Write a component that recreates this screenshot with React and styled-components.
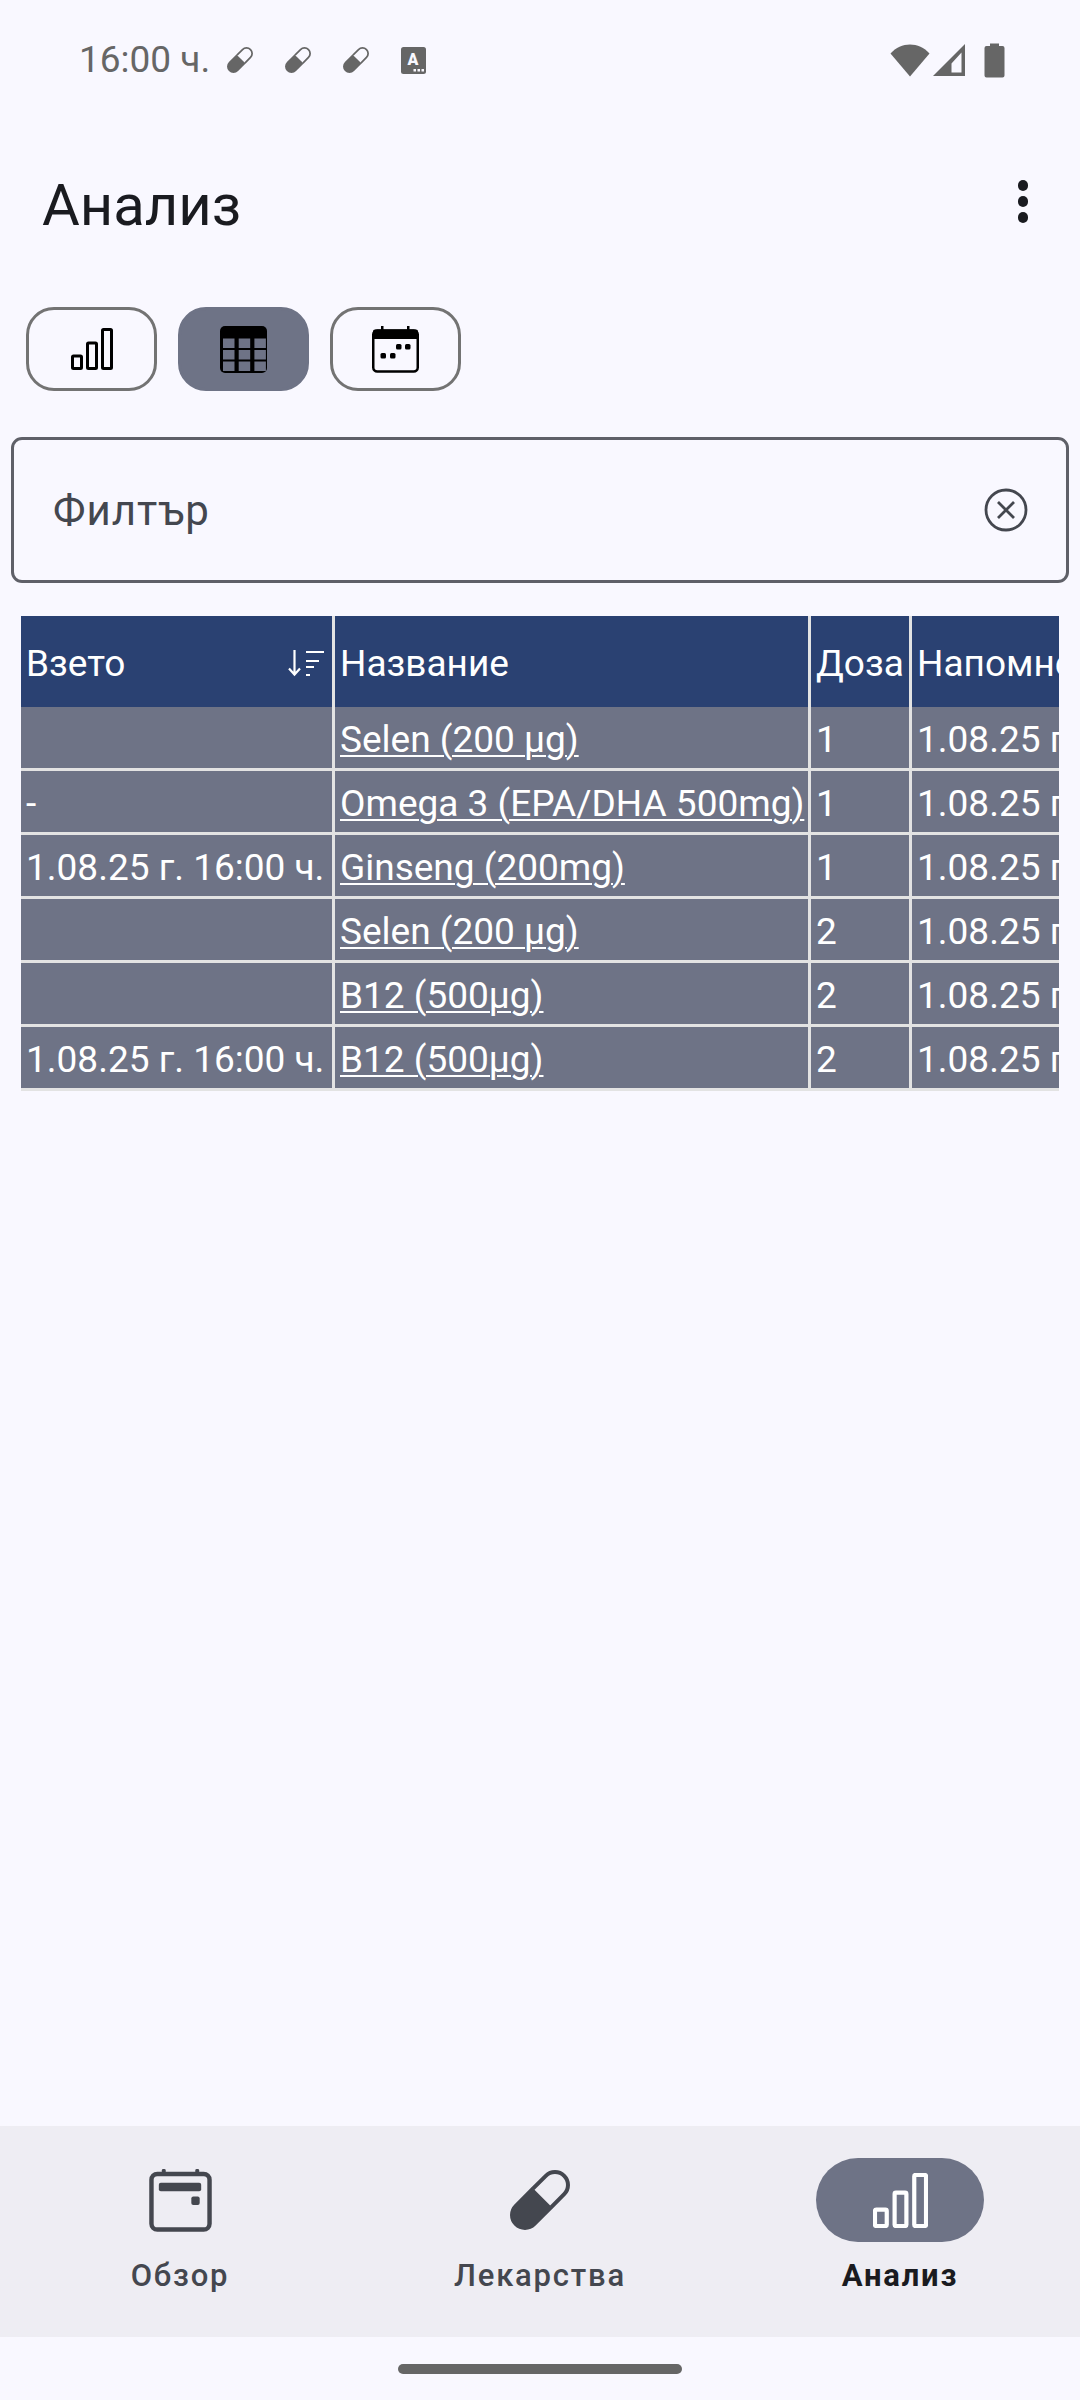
import React from "react";
import styled, { createGlobalStyle } from "styled-components";

const Global = createGlobalStyle`
  html, body { margin: 0; padding: 0; background: #f9f8ff; }
  * { box-sizing: border-box; }
  #root { width: 1080px; height: 2400px; }
`;

const Page = styled.div`
  width: 1080px;
  height: 2400px;
  display: flex;
  flex-direction: column;
  background: #f9f8ff;
  font-family: Roboto, "Noto Sans", sans-serif;
  overflow: hidden;
`;

const StatusBar = styled.div`
  height: 120px;
  flex: none;
  padding: 40px 0 0 79px;
  display: flex;
  align-items: flex-start;
  color: #666666;
`;

const Time = styled.span`
  font-size: 37px;
  line-height: 40px;
  width: 148px;
`;

const NotifIcons = styled.div`
  display: flex;
  gap: 32px;
  align-items: center;
  height: 40px;
`;

const StatusRight = styled.div`
  margin-left: auto;
  padding-right: 75px;
  display: flex;
  align-items: center;
  height: 40px;
`;

const AppBar = styled.div`
  height: 187px;
  flex: none;
  display: flex;
  align-items: flex-start;
  justify-content: space-between;
  padding: 49px 52px 0 42px;
`;

const Title = styled.h1`
  margin: 0;
  font-size: 58px;
  font-weight: 400;
  line-height: 72px;
  color: #1a1b20;
`;

const MoreDots = styled.div`
  display: flex;
  flex-direction: column;
  gap: 5.5px;
  padding-top: 11px;
  & > i {
    display: block;
    width: 10.5px;
    height: 10.5px;
    border-radius: 50%;
    background: #1a1b20;
  }
`;

const Toolbar = styled.div`
  display: flex;
  gap: 21px;
  padding-left: 26px;
  flex: none;
`;

const ToggleButton = styled.div`
  width: 131px;
  height: 84px;
  border-radius: 28px;
  display: flex;
  align-items: center;
  justify-content: center;
  border: 3px solid ${(p) => (p.$active ? "#6e7386" : "#737373")};
  background: ${(p) => (p.$active ? "#6e7386" : "transparent")};
`;

const FilterBox = styled.div`
  margin: 46px 11px 0;
  height: 146px;
  flex: none;
  border: 3px solid #5f6068;
  border-radius: 11px;
  display: flex;
  align-items: center;
  justify-content: space-between;
  padding: 0 38.5px 0 39px;
  color: #44474f;
`;

const FilterLabel = styled.span`
  font-size: 42px;
  letter-spacing: 1px;
`;

const TableClip = styled.div`
  margin: 33px 21px 0;
  flex: none;
  overflow: hidden;
`;

const TableGrid = styled.div`
  display: grid;
  grid-template-columns: 311px 473px 98px 400px;
  grid-template-rows: 88px;
  grid-auto-rows: 61px;
  column-gap: 3px;
  row-gap: 3px;
  width: 1294px;
  background: #e3e3e3;
  padding-bottom: 3px;
  color: #ffffff;
  font-size: 37px;
`;

const HeadCell = styled.div`
  margin-bottom: -3px;
  background: #2a4172;
  display: flex;
  align-items: center;
  justify-content: space-between;
  padding: 3px 8px 0 5px;
  white-space: nowrap;
`;

const Cell = styled.div`
  background: #6e7386;
  display: flex;
  align-items: center;
  padding: 3px 5px 0;
  white-space: nowrap;
`;

const LinkText = styled.span`
  text-decoration: underline;
  text-underline-offset: 3px;
  text-decoration-thickness: 2px;
`;

const Spacer = styled.div`
  flex: 1;
`;

const BottomNav = styled.nav`
  flex: none;
  height: 211px;
  background: #eeedf3;
  display: grid;
  grid-template-columns: repeat(3, 1fr);
  padding-top: 32px;
`;

const NavItem = styled.div`
  display: flex;
  flex-direction: column;
  align-items: center;
  color: ${(p) => (p.$active ? "#1a1b20" : "#44474f")};
  font-size: 31px;
  font-weight: ${(p) => (p.$active ? 700 : 500)};
  letter-spacing: 1.8px;
`;

const NavIconWrap = styled.div`
  width: 168px;
  height: 84px;
  border-radius: 42px;
  display: flex;
  align-items: center;
  justify-content: center;
  background: ${(p) => (p.$active ? "#6e7386" : "transparent")};
  margin-bottom: 15px;
`;

const GestureArea = styled.div`
  flex: none;
  height: 63px;
  display: flex;
  justify-content: center;
  padding-top: 27px;
`;

const GestureBar = styled.div`
  width: 284px;
  height: 10px;
  border-radius: 5px;
  background: #666666;
`;

/* Drawings */
const Pill = ({ size, color, sw }) => (
  <svg width={size} height={size} viewBox="0 0 60 60" style={{ display: "block" }}>
    <g transform="rotate(45 30 30)">
      <path d="M17 27V8.8A13 13 0 0 1 43 8.8V27" fill="none" stroke={color} strokeWidth={sw} />
      <path d="M15 26.7H45V51.2A15 15 0 0 1 15 51.2Z" fill={color} />
    </g>
  </svg>
);

const LetterIcon = () => (
  <svg width="25" height="27" viewBox="0 0 25 27" style={{ display: "block" }}>
    <rect width="25" height="27" rx="2.5" fill="#666666" />
    <text x="12" y="18" textAnchor="middle" fontFamily="Roboto" fontWeight="900" fontSize="16" fill="#f9f8ff">A</text>
    <rect x="12.5" y="22" width="2.5" height="2.5" fill="#f9f8ff" />
    <rect x="16.5" y="22" width="2.5" height="2.5" fill="#f9f8ff" />
    <rect x="20.5" y="22" width="2.5" height="2.5" fill="#f9f8ff" />
  </svg>
);

const Wifi = () => (
  <svg width="40" height="34" viewBox="0 0 40 34" style={{ display: "block" }}>
    <path d="M0.5 10.5C11 -1.5 29 -1.5 39.5 10.5L20 33.5Z" fill="#666666" />
  </svg>
);

const Signal = () => (
  <svg width="34" height="34" viewBox="0 0 34 34" style={{ display: "block", marginLeft: 2 }}>
    <path fillRule="evenodd" d="M33 1V33H1ZM29.5 9.5 19.5 20.5V29.5H29.5Z" fill="#666666" />
  </svg>
);

const Battery = () => (
  <svg width="21" height="35" viewBox="0 0 21 35" style={{ display: "block", marginLeft: 18 }}>
    <path d="M6 0.5H15V3H18.5A2 2 0 0 1 20.5 5V32.5A2 2 0 0 1 18.5 34.5H2.5A2 2 0 0 1 .5 32.5V5A2 2 0 0 1 2.5 3H6Z" fill="#666666" />
  </svg>
);

const BarsIcon = ({ w, h, color, sw }) => (
  <svg width={w} height={h} viewBox="0 0 42 42" style={{ display: "block" }} fill="none" stroke={color} strokeWidth={sw}>
    <rect x="1.5" y="28" width="9" height="12.5" rx="1" />
    <rect x="16.5" y="15" width="9" height="25.5" rx="1" />
    <rect x="31.5" y="1.5" width="9" height="39" rx="1" />
  </svg>
);

const TableIcon = () => (
  <svg width="47" height="47" viewBox="0 0 47 47" style={{ display: "block" }}>
    <rect width="47" height="47" rx="5" fill="#000" />
    {[0, 1, 2].map((r) =>
      [0, 1, 2].map((c) => (
        <rect key={`${r}${c}`} x={3 + c * 15.7} y={12.5 + r * 11.5} width="11.5" height="9.5" fill="#6e7386" />
      ))
    )}
  </svg>
);

const CalendarDots = () => (
  <svg width="47" height="47" viewBox="0 0 47 47" style={{ display: "block" }}>
    <rect x="1.25" y="4.5" width="44.5" height="41" rx="4" fill="none" stroke="#000" strokeWidth="2.5" />
    <path d="M3 3.5H44A2 2 0 0 1 46 5.5V13H1V5.5A2 2 0 0 1 3 3.5Z" fill="#000" />
    <rect x="9" y="0" width="2.5" height="5" fill="#000" />
    <rect x="35" y="0" width="2.5" height="5" fill="#000" />
    <rect x="8.5" y="27" width="5.5" height="5.5" rx="1.5" fill="#000" />
    <rect x="18" y="27" width="5.5" height="5.5" rx="1.5" fill="#000" />
    <rect x="24" y="18" width="5.5" height="5.5" rx="1.5" fill="#000" />
    <rect x="33" y="18" width="5.5" height="5.5" rx="1.5" fill="#000" />
  </svg>
);

const ClearIcon = () => (
  <svg width="44" height="44" viewBox="0 0 44 44" fill="none" stroke="#44474f" strokeWidth="2.8" style={{ display: "block" }}>
    <circle cx="22" cy="22" r="20" />
    <path d="M14 14 30 30M30 14 14 30" />
  </svg>
);

const SortIcon = () => (
  <svg width="36" height="28" viewBox="0 0 36 28" fill="none" stroke="#fff" strokeWidth="2.2" style={{ display: "block" }}>
    <path d="M6.5 1V25M1 19.5 6.5 25.5 12 19.5" />
    <path d="M18 3H36M18 12H31M18 18H26M18 26H22" />
  </svg>
);

const OverviewIcon = () => (
  <svg width="63" height="63" viewBox="0 0 64 64" style={{ display: "block" }}>
    <rect x="2.5" y="5" width="59" height="56.5" rx="6" fill="none" stroke="#44474f" strokeWidth="4.5" />
    <rect x="13" y="0" width="4" height="6" rx="1.5" fill="#44474f" />
    <rect x="47" y="0" width="4" height="6" rx="1.5" fill="#44474f" />
    <rect x="10" y="14" width="43" height="8.5" rx="2" fill="#44474f" />
    <rect x="43" y="28" width="8.5" height="8.5" rx="2" fill="#44474f" />
  </svg>
);

const rows = [
  ["", "Selen (200 µg)", "1"],
  ["-", "Omega 3 (EPA/DHA 500mg)", "1"],
  ["1.08.25 г. 16:00 ч.", "Ginseng (200mg)", "1"],
  ["", "Selen (200 µg)", "2"],
  ["", "B12 (500µg)", "2"],
  ["1.08.25 г. 16:00 ч.", "B12 (500µg)", "2"],
];

export default function App() {
  return (
    <Page>
      <Global />
      <StatusBar>
        <Time>16:00 ч.</Time>
        <NotifIcons>
          <Pill size={26} color="#666666" sw={4} />
          <Pill size={26} color="#666666" sw={4} />
          <Pill size={26} color="#666666" sw={4} />
          <LetterIcon />
        </NotifIcons>
        <StatusRight>
          <Wifi />
          <Signal />
          <Battery />
        </StatusRight>
      </StatusBar>
      <AppBar>
        <Title>Анализ</Title>
        <MoreDots><i /><i /><i /></MoreDots>
      </AppBar>
      <Toolbar>
        <ToggleButton><BarsIcon w={42} h={42} color="#000" sw={3} /></ToggleButton>
        <ToggleButton $active><TableIcon /></ToggleButton>
        <ToggleButton><CalendarDots /></ToggleButton>
      </Toolbar>
      <FilterBox>
        <FilterLabel>Филтър</FilterLabel>
        <ClearIcon />
      </FilterBox>
      <TableClip>
        <TableGrid>
          <HeadCell>Взето<SortIcon /></HeadCell>
          <HeadCell>Название</HeadCell>
          <HeadCell>Доза</HeadCell>
          <HeadCell>Напомнено</HeadCell>
          {rows.map((r, i) => (
            <React.Fragment key={i}>
              <Cell>{r[0]}</Cell>
              <Cell><LinkText>{r[1]}</LinkText></Cell>
              <Cell>{r[2]}</Cell>
              <Cell>1.08.25 г. 16:00 ч.</Cell>
            </React.Fragment>
          ))}
        </TableGrid>
      </TableClip>
      <Spacer />
      <BottomNav>
        <NavItem><NavIconWrap><OverviewIcon /></NavIconWrap>Обзор</NavItem>
        <NavItem><NavIconWrap><Pill size={60} color="#44474f" sw={4} /></NavIconWrap>Лекарства</NavItem>
        <NavItem $active><NavIconWrap $active><BarsIcon w={55} h={55} color="#fff" sw={3.2} /></NavIconWrap>Анализ</NavItem>
      </BottomNav>
      <GestureArea><GestureBar /></GestureArea>
    </Page>
  );
}
